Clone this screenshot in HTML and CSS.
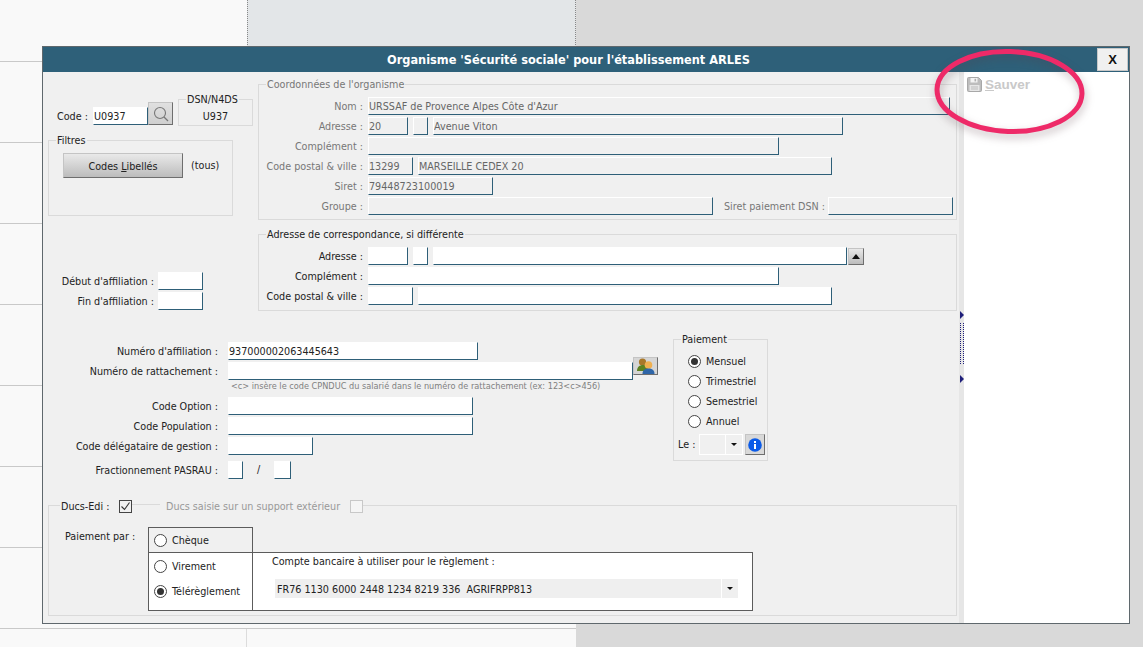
FILE: index.html
```html
<!DOCTYPE html>
<html lang="fr">
<head>
<meta charset="utf-8">
<title>Organisme</title>
<link rel="stylesheet" href="styles.css">
</head>
<body>
<div class="page">
  <div class="backdrop">
    <div class="bg-row bg-first"><div class="bg-cell"></div><div class="bg-cell bg-selected"></div></div>
    <div class="bg-row"></div><div class="bg-row"></div><div class="bg-row"></div><div class="bg-row"></div>
    <div class="bg-row"></div><div class="bg-row"></div><div class="bg-row"></div>
    <div class="bg-last"><div class="bg-cell"></div></div>
  </div>

  <div class="dialog">
    <header class="titlebar">
      <h1 class="title">Organisme 'Sécurité sociale' pour l'établissement ARLES</h1>
      <button class="close">X</button>
    </header>
    <div class="main">
      <div class="form">
        <div class="top">
          <div class="left-col">
            <div class="code-row">
              <span class="code-label">Code :</span>
              <span class="field white code-field">U0937</span>
              <button class="btn search-btn">
                <svg width="16" height="16" viewBox="0 0 16 16"><circle cx="7" cy="7" r="5.5" fill="none" stroke="#777" stroke-width="1.1"/><path d="M11 11l4 4" stroke="#777" stroke-width="1.3"/></svg>
              </button>
              <fieldset class="box dsn"><legend>DSN/N4DS</legend><div class="dsn-value">U937</div></fieldset>
            </div>
            <fieldset class="box filtres">
              <legend>Filtres</legend>
              <div class="filtres-row">
                <button class="btn codes-btn"><span>Codes <u>L</u>ibellés</span></button>
                <span class="tous">(tous)</span>
              </div>
            </fieldset>
            <div class="dates">
              <div class="date-row"><label class="date-label">Début d'affiliation :</label><span class="field white w45"></span></div>
              <div class="date-row"><label class="date-label">Fin d'affiliation :</label><span class="field white w45"></span></div>
            </div>
          </div>
          <div class="right-col">
            <fieldset class="box muted coords">
              <legend>Coordonnées de l'organisme</legend>
              <div class="rows">
                <div class="row"><label class="rlabel">Nom :</label><span class="field w582">URSSAF de Provence Alpes Côte d'Azur</span></div>
                <div class="row"><label class="rlabel">Adresse :</label><span class="field w40">20</span><span class="field w15"></span><span class="field w410">Avenue Viton</span></div>
                <div class="row"><label class="rlabel">Complément :</label><span class="field w411"></span></div>
                <div class="row"><label class="rlabel">Code postal &amp; ville :</label><span class="field w45">13299</span><span class="field w414">MARSEILLE CEDEX 20</span></div>
                <div class="row"><label class="rlabel">Siret :</label><span class="field w125">79448723100019</span></div>
                <div class="row"><label class="rlabel">Groupe :</label><span class="field w345"></span><span class="dsn-pay">Siret paiement DSN :</span><span class="field w125"></span></div>
              </div>
            </fieldset>
            <fieldset class="box corr">
              <legend>Adresse de correspondance, si différente</legend>
              <div class="rows">
                <div class="row"><label class="rlabel">Adresse :</label><span class="field white w40"></span><span class="field white w15"></span><span class="field white w414"></span><button class="btn up-btn"><svg width="8" height="5" viewBox="0 0 8 5"><path d="M4 0l4 5H0z" fill="#111"/></svg></button></div>
                <div class="row"><label class="rlabel">Complément :</label><span class="field white w411"></span></div>
                <div class="row"><label class="rlabel">Code postal &amp; ville :</label><span class="field white w45"></span><span class="field white w414"></span></div>
              </div>
            </fieldset>
          </div>
        </div>

        <div class="middle">
          <div class="numbers">
            <div class="nrow"><label class="nlabel">Numéro d'affiliation :</label><span class="field white w250">937000002063445643</span></div>
            <div class="nrow"><label class="nlabel">Numéro de rattachement :</label><span class="field white w405"></span>
              <button class="btn users-btn">
                <svg width="20" height="18" viewBox="0 0 20 18"><circle cx="6.500" cy="5" r="3.600" fill="#a9782a"/><path d="M1 14c0-4 2.500-6 6-6s5 2 5 6z" fill="#5e8220"/><circle cx="12.500" cy="8" r="3.800" fill="#f0b050"/><path d="M6.500 17c0-4 2.500-5.500 6-5.500s6 1.500 6 5.500z" fill="#2f66a8"/></svg>
              </button>
            </div>
            <div class="hint">&lt;c&gt; insère le code CPNDUC du salarié dans le numéro de rattachement (ex: 123&lt;c&gt;456)</div>
            <div class="nrow"><label class="nlabel">Code Option :</label><span class="field white w245"></span></div>
            <div class="nrow"><label class="nlabel">Code Population :</label><span class="field white w245"></span></div>
            <div class="nrow"><label class="nlabel">Code délégataire de gestion :</label><span class="field white w85"></span></div>
            <div class="nrow frac"><label class="nlabel">Fractionnement PASRAU :</label><span class="field white w15"></span><span class="slash">/</span><span class="field white w17"></span></div>
          </div>
          <fieldset class="box paiement">
            <legend>Paiement</legend>
            <div class="radio-line"><span class="radio on"></span>Mensuel</div>
            <div class="radio-line"><span class="radio"></span>Trimestriel</div>
            <div class="radio-line"><span class="radio"></span>Semestriel</div>
            <div class="radio-line"><span class="radio"></span>Annuel</div>
            <div class="le-row">
              <span class="le-label">Le :</span>
              <span class="le-select"><span class="le-value"></span><span class="le-arrow"><span class="caret"></span></span></span>
              <button class="btn info-btn">
                <svg width="14" height="14" viewBox="0 0 14 14"><circle cx="7" cy="7" r="6.800" fill="#0b5be8"/><rect x="6" y="6" width="2" height="5" fill="#fff"/><rect x="6" y="3" width="2" height="2" fill="#fff"/></svg>
              </button>
            </div>
          </fieldset>
        </div>

        <fieldset class="box ducs">
          <legend class="ducs-legend">
            <span class="ducs-name">Ducs-Edi :</span>
            <span class="check"><svg width="11" height="11" viewBox="0 0 11 11"><path d="M1.500 5.500l3 3 5-7" fill="none" stroke="#333" stroke-width="1.100"/></svg></span>
            <span class="legend-line"></span>
            <span class="ducs-muted">Ducs saisie sur un support extérieur</span>
            <span class="check check-off"></span>
          </legend>
          <div class="pay-wrap">
            <span class="pay-label">Paiement par :</span>
            <div class="pay-table">
              <div class="cheque"><span class="radio"></span>Chèque</div>
              <div class="pay-lower">
                <div class="pay-modes">
                  <div class="mode"><span class="radio"></span>Virement</div>
                  <div class="mode"><span class="radio on"></span>Télérèglement</div>
                </div>
                <div class="bank">
                  <div class="bank-title">Compte bancaire à utiliser pour le règlement :</div>
                  <div class="bank-select">
                    <span class="bank-value">FR76 1130 6000 2448 1234 8219 336&nbsp; AGRIFRPP813</span>
                    <span class="bank-arrow"><span class="caret"></span></span>
                  </div>
                </div>
              </div>
            </div>
          </div>
        </fieldset>
      </div>

      <div class="splitter">
        <span class="tri"></span>
        <span class="dots"></span>
        <span class="tri"></span>
      </div>

      <aside class="side">
        <div class="save">
          <svg width="15" height="15" viewBox="0 0 15 15"><path d="M.5 1.500a1 1 0 0 1 1-1h10l3 3v10a1 1 0 0 1-1 1h-12a1 1 0 0 1-1-1z" fill="#bdbdbd" stroke="#a8a8a8"/><rect x="3.500" y="1" width="7" height="4.500" fill="#f4f4f4"/><rect x="7.500" y="1.800" width="1.600" height="2.600" fill="#b0b0b0"/><rect x="2.500" y="8" width="10" height="6" fill="#e6e6e6"/><path d="M4 10h7M4 12h7" stroke="#bdbdbd"/></svg>
          <span class="save-text"><u>S</u>auver</span>
        </div>
      </aside>
    </div>
  </div>

  <svg class="circle" width="170" height="100" viewBox="0 0 170 100">
    <ellipse cx="84.500" cy="48.500" rx="72.500" ry="40" transform="rotate(2 84.500 48.500)" fill="none" stroke="#ee2a68" stroke-width="5"/>
  </svg>
</div>
</body>
</html>
```
FILE: styles.css
```css
* { box-sizing: border-box; }
html, body { margin: 0; padding: 0; }
body { font-family: "DejaVu Sans Condensed", "DejaVu Sans", sans-serif; font-size: 10.7px; color: #222; }
.page { position: relative; width: 1143px; height: 647px; overflow: hidden; background: #d9d9d9; }

.backdrop { width: 576px; height: 647px; background: #f9f9f9; display: flex; flex-direction: column; }
.bg-row { height: 81px; flex: none; border-bottom: 1px solid #c9c9c9; }
.bg-first { height: 62px; display: flex; }
.bg-cell { width: 247px; flex: none; border-right: 1px solid #dcdcdc; }
.bg-first .bg-cell:first-child { border-right: 0; }
.bg-selected { width: 329px; background: #e3e6e8; border-left: 1px dotted #888; border-right: 1px dotted #888; }
.bg-last { flex: 1; display: flex; }

.dialog { position: absolute; left: 42px; top: 46px; width: 1088px; height: 578px; background: #f0f0f0; border: 1px solid #5f686d; display: flex; flex-direction: column; }
.titlebar { height: 25px; flex: none; background: #2e6079; display: flex; align-items: center; padding-right: 1px; }
.title { flex: 1; margin: 0; text-align: center; padding-right: 3px; color: #fff; font-size: 12.65px; font-weight: bold; font-family: "DejaVu Sans Condensed", "DejaVu Sans", sans-serif; }
.close { width: 31px; height: 23px; background: #f0f0f0; border: 1px solid #c8c8c8; padding: 0; font: bold 13px "Liberation Sans", sans-serif; color: #111; }

.main { flex: 1; display: flex; min-height: 0; }
.form { width: 916px; flex: none; padding-left: 5px; }
.splitter { width: 5px; flex: none; background: #e6e6e6; display: flex; flex-direction: column; align-items: flex-end; padding-top: 239px; }
.tri { width: 0; height: 0; border-left: 4px solid #1f1f7a; border-top: 4px solid transparent; border-bottom: 4px solid transparent; }
.dots { width: 4px; height: 41px; margin: 4px 0 11px; border-left: 1px dotted #1f1f7a; border-right: 1px dotted #1f1f7a; }
.side { flex: 1; background: #fff; padding: 5px 3px; }
.save { display: flex; align-items: center; gap: 3px; }
.save-text { font: bold 13.5px "Liberation Sans", sans-serif; color: #c9c9c9; }

.box { margin: 0; padding: 0; border: 1px solid #dadada; min-width: 0; }
.box legend { padding: 0 1px; line-height: 16px; height: 14px; }
.muted, .muted .rlabel { color: #777; }

.field { display: block; flex: none; height: 18px; line-height: 17px; padding-left: 0; border: 1px solid #2e5f78; border-top-color: #fff; border-left-color: #fff; background: #f0f0f0; color: #666; white-space: nowrap; overflow: hidden; }
.field.white { background: #fff; color: #222; border-top-color: #fff; border-left-color: #fff; }
.w15 { width: 15px; } .w17 { width: 17px; } .w40 { width: 40px; } .w45 { width: 45px; } .w85 { width: 85px; }
.w125 { width: 125px; } .w245 { width: 245px; } .w250 { width: 250px; } .w345 { width: 345px; }
.w405 { width: 405px; } .w410 { width: 410px; } .w411 { width: 411px; } .w414 { width: 414px; } .w582 { width: 582px; }

.btn { background: linear-gradient(#e9e9e9, #bcbcbc); border: 1px solid #c4c4c4; border-right-color: #6e6e6e; border-bottom-color: #6e6e6e; padding: 0; display: flex; align-items: center; justify-content: center; font: inherit; color: #222; }

.top { display: flex; }
.left-col { width: 210px; flex: none; padding-top: 20px; }
.right-col { width: 699px; flex: none; padding-top: 5px; }

.code-row { display: flex; align-items: flex-end; padding-left: 9px; height: 34px; }
.code-label { width: 36px; margin-bottom: 0; line-height: 18px; }
.code-field { width: 55px; margin-bottom: 1px; }
.search-btn { width: 25px; height: 23px; margin-bottom: 1px; background: linear-gradient(#e0e0e0, #cfcfcf); }
.dsn { width: 75px; height: 34px; margin-left: 5px; flex: none; }
.dsn legend { margin-left: 7px; }
.dsn-value { text-align: center; line-height: 21px; }

.filtres { width: 185px; height: 83px; margin-top: 7px; }
.filtres legend { margin-left: 7px; }
.filtres-row { display: flex; align-items: center; gap: 8px; padding: 5px 0 0 14px; }
.codes-btn { width: 120px; height: 25px; padding-top: 1px; }
.tous { line-height: 27px; }

.dates { margin-top: 56px; display: flex; flex-direction: column; gap: 2px; }
.date-row { display: flex; align-items: center; gap: 4px; }
.date-label { width: 106px; text-align: right; white-space: nowrap; }

.coords { height: 143px; }
.coords legend, .corr legend { margin-left: 7px; }
.corr { height: 84px; margin-top: 7px; }
.rows { display: flex; flex-direction: column; gap: 2px; padding-top: 6px; }
.row { display: flex; align-items: center; gap: 5px; }
.rlabel { width: 104px; flex: none; text-align: right; white-space: nowrap; }
.dsn-pay { width: 105px; flex: none; padding-left: 6px; white-space: nowrap; color: #777; }
.up-btn { width: 16px; height: 17px; margin-left: -4px; }

.middle { display: flex; }
.numbers { width: 625px; flex: none; padding-top: 31px; }
.nrow { display: flex; align-items: flex-start; margin-bottom: 2px; }
.nlabel { width: 170px; flex: none; height: 18px; margin-right: 10px; text-align: right; white-space: nowrap; line-height: 20px; }
.users-btn { width: 25px; height: 18px; margin-top: -5px; background: #d6d6d6; }
.hint { margin: -2px 0 0; padding-left: 183px; height: 17px; font-size: 9.1px; line-height: 12px; color: #808080; white-space: nowrap; }
.frac { margin: 6px 0 0; }
.slash { width: 31px; flex: none; text-align: center; line-height: 18px; }

.paiement { width: 95px; height: 129px; margin-top: 21px; padding: 5px 0 0 4px; flex: none; }
.paiement legend { margin-left: 3px; }
.radio-line { display: flex; align-items: center; gap: 5px; height: 20px; padding-left: 10px; }
.radio { width: 13px; height: 13px; flex: none; border-radius: 50%; border: 1px solid #444; background: #fff; display: inline-block; position: relative; }
.radio.on::after { content: ""; position: absolute; left: 2px; top: 2px; width: 7px; height: 7px; border-radius: 50%; background: #333; }
.le-row { display: flex; align-items: flex-start; margin-top: 3px; }
.le-label { width: 21px; flex: none; line-height: 22px; }
.le-select { width: 44px; height: 21px; border: 1px solid #fff; display: flex; }
.le-value { width: 26px; border-right: 1px solid #fff; }
.le-arrow { flex: 1; display: flex; align-items: center; justify-content: center; }
.caret { width: 0; height: 0; border-top: 3px solid #111; border-left: 3px solid transparent; border-right: 3px solid transparent; }
.info-btn { width: 20px; height: 21px; margin-left: 2px; background: #d8d8d8; }

.ducs { width: 909px; height: 118px; margin-top: 19px; padding: 0; }
.box .ducs-legend { display: flex; align-items: flex-start; margin-left: 11px; padding: 0 0 0 1px; line-height: 17px; }
.ducs-name { width: 50px; flex: none; white-space: nowrap; }
.check { width: 13px; height: 13px; margin: 2px 0 -1px 8px; border: 1px solid #444; flex: none; display: flex; align-items: center; justify-content: center; background: #f0f0f0; }
.check-off { margin-left: 10px; border-color: #c8c8c8; background: #f5f5f5; margin-right: 0; }
.legend-line { width: 28px; height: 7px; border-bottom: 1px solid #dadada; flex: none; }
.ducs-muted { margin-left: 6px; color: #999; white-space: nowrap; }

.pay-wrap { display: flex; padding: 15px 0 0 16px; }
.pay-label { width: 83px; flex: none; line-height: 20px; }
.pay-table { width: 605px; flex: none; }
.cheque { width: 105px; height: 26px; border: 1px solid #5c5c5c; display: flex; align-items: center; gap: 5px; padding-left: 5px; }
.pay-lower { height: 59px; margin-top: -1px; border: 1px solid #5c5c5c; background: #fff; display: flex; }
.pay-modes { width: 104px; flex: none; border-right: 1px solid #5c5c5c; padding-top: 1px; }
.mode { height: 25px; display: flex; align-items: center; gap: 5px; padding-left: 5px; }
.bank { flex: 1; padding: 2px 0 0 19px; }
.bank-title { line-height: 14px; }
.bank-select { width: 463px; height: 19px; margin: 10px 0 0 3px; display: flex; gap: 1px; }
.bank-value { width: 446px; background: #efefef; line-height: 21px; padding-left: 2px; white-space: nowrap; }
.bank-arrow { flex: 1; background: #efefef; display: flex; align-items: center; justify-content: center; }

.circle { position: absolute; left: 925px; top: 43px; filter: drop-shadow(1px 4px 4px rgba(90, 60, 70, 0.35)); }
```
